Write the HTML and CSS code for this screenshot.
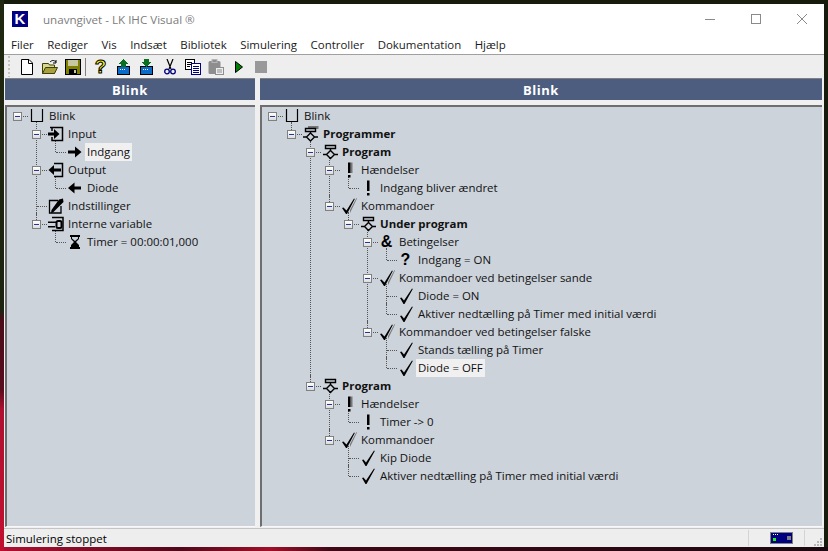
FILE: index.html
```html
<!DOCTYPE html>
<html lang="da">
<head>
    <meta charset="UTF-8">
    <title>unavngivet - LK IHC Visual</title>
    <link rel="stylesheet" href="styles.css">
</head>
<body>
    <svg class="sprite" width="0" height="0">
        <symbol id="i-root" viewBox="0 0 16 16"><path d="M2.5 1V13.5H13.5V1" fill="none" stroke="#000" stroke-width="1.2"/></symbol>
        <symbol id="i-input" viewBox="0 0 16 16"><path d="M2 1.5H14.5V14.5H4V11 M4 5V1.5" fill="none" stroke="#000" stroke-width="1.5"/><path d="M0 6.5H6V3L11.5 8L6 13V9.5H0Z" fill="#000"/></symbol>
        <symbol id="i-output" viewBox="0 0 16 16"><path d="M6 1.5H14.5V14.5H6" fill="none" stroke="#000" stroke-width="1.5"/><path d="M13 6.5H6V3L0.5 8L6 13V9.5H13Z" fill="#000"/></symbol>
        <symbol id="i-right" viewBox="0 0 16 16"><path d="M1 6.5H8V2.5L14.5 8L8 13.5V9.5H1Z" fill="#000"/></symbol>
        <symbol id="i-left" viewBox="0 0 16 16"><path d="M14 6.5H7.5V2.5L1 8L7.5 13.5V9.5H14Z" fill="#000"/></symbol>
        <symbol id="i-settings" viewBox="0 0 16 16"><path d="M10 2.5H1.5V15H13V8" fill="none" stroke="#000" stroke-width="1.3"/><path d="M11 1.5L15 0.5L15.5 4L5 14.5L3 15L3.5 12Z" fill="#000"/></symbol>
        <symbol id="i-vars" viewBox="0 0 16 16"><path d="M4 1.5H15V14.5H4" fill="none" stroke="#000" stroke-width="1.5"/><path d="M0 5.5H9V7H0Z M0 10H7V11.5H0Z" fill="#000"/><rect x="8.5" y="5" width="5" height="7" rx="1.5" fill="none" stroke="#000" stroke-width="2"/></symbol>
        <symbol id="i-timer" viewBox="0 0 16 16"><path d="M3 1H13V3H12V5L9 8L12 11V13H13V15H3V13H4V11L7 8L4 5V3H3Z" fill="#000"/><path d="M5 3H11V4.5L8 7L5 4.5Z" fill="#ccd3db"/></symbol>
        <symbol id="i-program" viewBox="0 0 16 16"><path d="M3.5 1.5H13.5V4.5H3.5Z M8.5 4.5V6.5 M8.5 6.5L12.5 10.5L8.5 14.5L4.5 10.5Z M1 10.5H4.5 M12.5 10.5H16" fill="none" stroke="#000" stroke-width="1.4"/></symbol>
        <symbol id="i-programs" viewBox="0 0 16 16"><path d="M5 0H15.5V3H5Z" fill="#777"/><path d="M2.5 2.5H12.5V5.5H2.5Z" fill="#ccd3db" stroke="#000" stroke-width="1.4"/><path d="M7.5 5.5V7 M7.5 7L11.5 11L7.5 15L3.5 11Z M0 11H3.5 M11.5 11H15" fill="none" stroke="#000" stroke-width="1.4"/></symbol>
        <symbol id="i-bang" viewBox="0 0 16 16"><path d="M7 0.5H9.5V11H7Z M7 13H9.5V15.5H7Z" fill="#000"/></symbol>
        <symbol id="i-bangs" viewBox="0 0 16 16"><path d="M9.5 0.5H11.5V11H9.5Z" fill="#777"/><path d="M7 0.5H9.5V11H7Z M7 13H9.5V15.5H7Z" fill="#000"/></symbol>
        <symbol id="i-check" viewBox="0 0 16 16"><path d="M2 10L3.5 9.5L6 12.5L14 0.5L14.8 1L6.5 16H5.5Z" fill="#000"/></symbol>
        <symbol id="i-checks" viewBox="0 0 16 16"><path d="M9 12L15.5 0L16 0.5L9 15Z" fill="#777"/><path d="M1 10L2.5 9.5L5.5 12.5L13 0.5L13.8 1L6 16H5Z" fill="#000"/></symbol>
    </svg>

    <div class="window">
        <header class="titlebar">
            <div class="logo">K</div>
            <span class="title">unavngivet - LK IHC Visual ®</span>
            <div class="win-buttons">
                <svg width="12" height="12" viewBox="0 0 12 12"><path d="M1 6.5H11" stroke="#8a8a8a"/></svg>
                <svg width="12" height="12" viewBox="0 0 12 12"><rect x="1.5" y="1.5" width="9" height="9" fill="none" stroke="#8a8a8a"/></svg>
                <svg width="12" height="12" viewBox="0 0 12 12"><path d="M1 1L11 11M11 1L1 11" stroke="#8a8a8a"/></svg>
            </div>
        </header>

        <nav class="menu">
            <span>Filer</span><span>Rediger</span><span>Vis</span><span>Indsæt</span><span>Bibliotek</span><span>Simulering</span><span>Controller</span><span>Dokumentation</span><span>Hjælp</span>
        </nav>

        <div class="toolbar">
            <div class="grip"></div>
            <span class="tool"><svg width="16" height="16" viewBox="0 0 16 16"><path d="M2.5 0.5H10L13.5 4V15.5H2.5Z" fill="#fff" stroke="#000"/><path d="M9.5 0.5V4.5H13.5" fill="none" stroke="#000"/></svg></span>
            <span class="tool"><svg width="16" height="16" viewBox="0 0 16 16"><path d="M0.5 14.5V4.5H6.5L7.5 6H12.5V14.5Z" fill="#d8d890" stroke="#404000"/><path d="M0.5 14.5L3.5 8.5H15.5L12.5 14.5Z" fill="#a8a040" stroke="#404000"/><path d="M8 3C10 1 12 1 14 3M14 1V4H11" fill="none" stroke="#000"/></svg></span>
            <span class="tool"><svg width="16" height="16" viewBox="0 0 16 16" shape-rendering="crispEdges"><rect x="0.5" y="0.5" width="15" height="15" fill="#808000" stroke="#000"/><rect x="3" y="1" width="10" height="6" fill="#c8c8a0"/><rect x="4" y="10" width="8" height="5" fill="#000"/><rect x="9" y="11" width="2" height="3" fill="#c8c8a0"/></svg></span>
            <span class="tool-sep"></span>
            <span class="tool"><span class="help-mark">?</span></span>
            <span class="tool"><svg width="16" height="16" viewBox="0 0 16 16" shape-rendering="crispEdges"><rect x="1.5" y="7.5" width="12" height="8" fill="#0a6cc8" stroke="#000"/><path d="M4 10H5V11H4Z M6 10H7V11H6Z M8 10H9V11H8Z" fill="#fff"/><path d="M7.5 0L13 5H10V8H5V5H2Z" fill="#0a7020"/></svg></span>
            <span class="tool"><svg width="16" height="16" viewBox="0 0 16 16" shape-rendering="crispEdges"><rect x="1.5" y="7.5" width="12" height="8" fill="#0a6cc8" stroke="#000"/><path d="M4 10H5V11H4Z M6 10H7V11H6Z M8 10H9V11H8Z" fill="#fff"/><path d="M5 0H10V3H13L7.5 8L2 3H5Z" fill="#0a7020"/></svg></span>
            <span class="tool"><svg width="16" height="16" viewBox="0 0 16 16"><path d="M5 0L9 10M11 0L7 10" fill="none" stroke="#000" stroke-width="1.2"/><circle cx="5" cy="12.5" r="2.3" fill="none" stroke="#000080" stroke-width="1.3"/><circle cx="11" cy="12.5" r="2.3" fill="none" stroke="#000080" stroke-width="1.3"/></svg></span>
            <span class="tool"><svg width="16" height="16" viewBox="0 0 16 16" shape-rendering="crispEdges"><rect x="0.5" y="0.5" width="9" height="10" fill="#fff" stroke="#000"/><path d="M2 3H7M2 5H7M2 7H5" stroke="#000"/><rect x="6.5" y="4.5" width="9" height="11" fill="#fff" stroke="#000080"/><path d="M8 7H14M8 9H14M8 11H14M8 13H14" stroke="#000080"/></svg></span>
            <span class="tool"><svg width="16" height="16" viewBox="0 0 16 16"><rect x="0.5" y="2" width="12" height="13" rx="1.5" fill="#8e8e8e"/><rect x="4" y="0.5" width="5" height="3" fill="#8e8e8e" stroke="#b5b5b5"/><rect x="7.5" y="8.5" width="8" height="7" fill="#eee" stroke="#8e8e8e"/><path d="M9 11H14M9 13H14" stroke="#8e8e8e"/></svg></span>
            <span class="tool"><svg width="16" height="16" viewBox="0 0 16 16"><path d="M4.5 2.5L11.5 8L4.5 13.5Z" fill="#008000" stroke="#000"/></svg></span>
            <span class="tool"><svg width="16" height="16" viewBox="0 0 16 16"><rect x="1" y="2" width="12" height="12" fill="#999"/></svg></span>
        </div>

        <div class="panels">
            <section class="panel panel-left">
                <h2 class="panel-head">Blink</h2>
                <div class="panel-body">
                    <ul class="tree">
                        <li><div class="row"><i class="exp"></i><svg class="ico"><use href="#i-root"/></svg><span class="label">Blink</span></div>
                            <ul>
                                <li><div class="row"><i class="exp"></i><svg class="ico"><use href="#i-input"/></svg><span class="label">Input</span></div>
                                    <ul>
                                        <li><div class="row"><i class="none"></i><svg class="ico"><use href="#i-right"/></svg><span class="label selected">Indgang</span></div></li>
                                    </ul>
                                </li>
                                <li><div class="row"><i class="exp"></i><svg class="ico"><use href="#i-output"/></svg><span class="label">Output</span></div>
                                    <ul>
                                        <li><div class="row"><i class="none"></i><svg class="ico"><use href="#i-left"/></svg><span class="label">Diode</span></div></li>
                                    </ul>
                                </li>
                                <li><div class="row"><i class="none"></i><svg class="ico"><use href="#i-settings"/></svg><span class="label">Indstillinger</span></div></li>
                                <li><div class="row"><i class="exp"></i><svg class="ico"><use href="#i-vars"/></svg><span class="label">Interne variable</span></div>
                                    <ul>
                                        <li><div class="row"><i class="none"></i><svg class="ico"><use href="#i-timer"/></svg><span class="label">Timer = 00:00:01,000</span></div></li>
                                    </ul>
                                </li>
                            </ul>
                        </li>
                    </ul>
                </div>
            </section>

            <section class="panel panel-right">
                <h2 class="panel-head">Blink</h2>
                <div class="panel-body">
                    <ul class="tree">
                        <li><div class="row"><i class="exp"></i><svg class="ico"><use href="#i-root"/></svg><span class="label">Blink</span></div>
                            <ul>
                                <li><div class="row"><i class="exp"></i><svg class="ico"><use href="#i-programs"/></svg><span class="label bold">Programmer</span></div>
                                    <ul>
                                        <li><div class="row"><i class="exp"></i><svg class="ico"><use href="#i-program"/></svg><span class="label bold">Program</span></div>
                                            <ul>
                                                <li><div class="row"><i class="exp"></i><svg class="ico"><use href="#i-bangs"/></svg><span class="label">Hændelser</span></div>
                                                    <ul>
                                                        <li><div class="row"><i class="none"></i><svg class="ico"><use href="#i-bang"/></svg><span class="label">Indgang bliver ændret</span></div></li>
                                                    </ul>
                                                </li>
                                                <li><div class="row"><i class="exp"></i><svg class="ico"><use href="#i-checks"/></svg><span class="label">Kommandoer</span></div>
                                                    <ul>
                                                        <li><div class="row"><i class="exp"></i><svg class="ico"><use href="#i-program"/></svg><span class="label bold">Under program</span></div>
                                                            <ul>
                                                                <li><div class="row"><i class="exp"></i><span class="ico glyph">&amp;</span><span class="label">Betingelser</span></div>
                                                                    <ul>
                                                                        <li><div class="row"><i class="none"></i><span class="ico glyph">?</span><span class="label">Indgang = ON</span></div></li>
                                                                    </ul>
                                                                </li>
                                                                <li><div class="row"><i class="exp"></i><svg class="ico"><use href="#i-checks"/></svg><span class="label">Kommandoer ved betingelser sande</span></div>
                                                                    <ul>
                                                                        <li><div class="row"><i class="none"></i><svg class="ico"><use href="#i-check"/></svg><span class="label">Diode = ON</span></div></li>
                                                                        <li><div class="row"><i class="none"></i><svg class="ico"><use href="#i-check"/></svg><span class="label">Aktiver nedtælling på Timer med initial værdi</span></div></li>
                                                                    </ul>
                                                                </li>
                                                                <li><div class="row"><i class="exp"></i><svg class="ico"><use href="#i-checks"/></svg><span class="label">Kommandoer ved betingelser falske</span></div>
                                                                    <ul>
                                                                        <li><div class="row"><i class="none"></i><svg class="ico"><use href="#i-check"/></svg><span class="label">Stands tælling på Timer</span></div></li>
                                                                        <li><div class="row"><i class="none"></i><svg class="ico"><use href="#i-check"/></svg><span class="label selected">Diode = OFF</span></div></li>
                                                                    </ul>
                                                                </li>
                                                            </ul>
                                                        </li>
                                                    </ul>
                                                </li>
                                            </ul>
                                        </li>
                                        <li><div class="row"><i class="exp"></i><svg class="ico"><use href="#i-program"/></svg><span class="label bold">Program</span></div>
                                            <ul>
                                                <li><div class="row"><i class="exp"></i><svg class="ico"><use href="#i-bangs"/></svg><span class="label">Hændelser</span></div>
                                                    <ul>
                                                        <li><div class="row"><i class="none"></i><svg class="ico"><use href="#i-bang"/></svg><span class="label">Timer -&gt; 0</span></div></li>
                                                    </ul>
                                                </li>
                                                <li><div class="row"><i class="exp"></i><svg class="ico"><use href="#i-checks"/></svg><span class="label">Kommandoer</span></div>
                                                    <ul>
                                                        <li><div class="row"><i class="none"></i><svg class="ico"><use href="#i-check"/></svg><span class="label">Kip Diode</span></div></li>
                                                        <li><div class="row"><i class="none"></i><svg class="ico"><use href="#i-check"/></svg><span class="label">Aktiver nedtælling på Timer med initial værdi</span></div></li>
                                                    </ul>
                                                </li>
                                            </ul>
                                        </li>
                                    </ul>
                                </li>
                            </ul>
                        </li>
                    </ul>
                </div>
            </section>
        </div>

        <footer class="statusbar">
            <span class="status-text">Simulering stoppet</span>
            <span class="status-cell">
                <span class="led"><b class="dots"></b><b class="green"></b><b class="square"></b></span>
            </span>
            <span class="status-grip">
                <svg width="9" height="9" viewBox="0 0 9 9"><path d="M6 0H8V2H6Z M3 3H5V5H3Z M6 3H8V5H6Z M0 6H2V8H0Z M3 6H5V8H3Z M6 6H8V8H6Z" fill="#b8b8b8"/></svg>
            </span>
        </footer>
    </div>
</body>
</html>
```

FILE: styles.css
```css
* {
    box-sizing: border-box;
}
body {
    margin: 0;
    padding: 4px;
    height: 551px;
    overflow: hidden;
    font-family: "Open Sans", "Noto Sans", sans-serif;
    font-size: 11.45px;
    color: #000;
    background:
        linear-gradient(#20280f 0, #1c2410 310px, #4a0c18 320px, #5a0c1c 390px, #b01030 410px, #c01030 540px) 0 0 / 4px 100% no-repeat,
        linear-gradient(90deg, #b01030 0, #50081a 180px, #a01028 270px, #400816 330px, #1c0810 100%) 0 100% / 100% 4px no-repeat,
        #161b0c;
}
.sprite {
    position: absolute;
}
.window {
    height: 543px;
    display: flex;
    flex-direction: column;
    background: #f0f0f0;
}

/* title bar */
.titlebar {
    height: 30px;
    background: #fff;
    display: flex;
    align-items: center;
    padding-left: 8px;
    flex: none;
}
.logo {
    width: 16px;
    height: 16px;
    background: #000080;
    color: #fff;
    font: bold 15px/16px "Liberation Sans", sans-serif;
    text-align: center;
}
.title {
    margin-left: 15px;
    font-size: 11.6px;
    color: #7c7c7c;
}
.win-buttons {
    margin-left: auto;
    display: flex;
    gap: 34px;
    padding-right: 16px;
}

/* menu */
.menu {
    height: 21px;
    flex: none;
    background: #fff;
    display: flex;
    align-items: center;
    padding-left: 7px;
    border-bottom: 1px solid #a0a0a0;
}
.menu span {
    margin-right: 13.5px;
    color: #1a1a1a;
}

/* toolbar */
.toolbar {
    height: 23px;
    flex: none;
    display: flex;
    align-items: center;
    background: #eeeeee;
    padding-left: 4px;
}
.grip {
    width: 2px;
    height: 21px;
    margin-right: 5px;
    background: repeating-linear-gradient(#c4c4c4 0 2px, transparent 2px 4px);
}
.tool {
    width: 23px;
    height: 22px;
    display: flex;
    align-items: center;
    justify-content: center;
}
.tool-sep {
    width: 1px;
    height: 18px;
    margin: 0 3px 0 1px;
    background: #808080;
}
.help-mark {
    font: bold 19px/20px "Liberation Sans", sans-serif;
    color: #ffff00;
    -webkit-text-stroke: 1px #000;
}

/* panels */
.panels {
    flex: 1;
    min-height: 0;
    display: flex;
    gap: 5px;
    padding: 0 2px 1px 1px;
    background: #f0f0f0;
}
.panel {
    display: flex;
    flex-direction: column;
}
.panel-left {
    width: 250px;
    flex: none;
}
.panel-right {
    flex: 1;
}
.panel-head {
    margin: 0;
    height: 22px;
    border-top: 1px solid #808080;
    background: #4d5d80;
    color: #fff;
    font-size: 13px;
    font-weight: 700;
    line-height: 22px;
    text-align: center;
    letter-spacing: 0.5px;
    flex: none;
}
.panel-body {
    flex: 1;
    margin-top: 5px;
    background: #ccd3db;
    border-top: 2px solid #6e6e6e;
    border-left: 2px solid #6e6e6e;
    border-bottom: 1px solid #f8f8f8;
    padding-left: 1px;
    overflow: hidden;
}

/* tree */
.tree, .tree ul {
    list-style: none;
    margin: 0;
    padding: 0;
}
.tree ul {
    margin-left: 19px;
}
.tree li {
    position: relative;
}
.tree ul > li::before {
    content: "";
    position: absolute;
    left: 9px;
    top: -3px;
    bottom: 0;
    border-left: 1px dotted #555;
}
.tree ul > li:last-child::before {
    bottom: auto;
    height: 12px;
}
.tree li::after {
    content: "";
    position: absolute;
    left: 10px;
    top: 9px;
    width: 10px;
    border-top: 1px dotted #555;
}
.row {
    position: relative;
    z-index: 1;
    height: 18px;
    display: flex;
    align-items: center;
    white-space: nowrap;
}
.none {
    width: 19px;
    flex: none;
}
.exp {
    width: 9px;
    height: 9px;
    margin: 0 5px;
    flex: none;
    border: 1px solid #808080;
    background:
        linear-gradient(#1f3a93, #1f3a93) center / 5px 1px no-repeat,
        linear-gradient(#fff, #dcdcdc);
}
.ico {
    width: 16px;
    height: 16px;
    margin: 0 1.5px;
    flex: none;
    position: relative;
}
.glyph {
    font: bold 16px/16px "Liberation Sans", sans-serif;
    text-align: center;
}
.label {
    margin-left: 1px;
    padding: 0 2px;
    line-height: 18px;
    height: 18px;
    color: #111;
}
.label.bold {
    font-weight: 700;
}
.label.selected {
    background: #f0f0f0;
}

/* status bar */
.statusbar {
    height: 19px;
    flex: none;
    display: flex;
    align-items: center;
    border-top: 1px solid #c4c4c4;
    background: #eeeeee;
    padding-left: 2px;
}
.status-text {
    flex: 1;
}
.status-cell {
    width: 57px;
    height: 16px;
    border-left: 1px solid #d4d4d4;
    border-right: 1px solid #d4d4d4;
    display: flex;
    align-items: center;
    justify-content: flex-end;
    padding-right: 11px;
}
.led {
    position: relative;
    width: 23px;
    height: 12px;
    background: #000080;
    border: 1px solid #808080;
    display: block;
}
.led b {
    position: absolute;
    display: block;
}
.led .dots {
    left: 2px;
    top: 1px;
    width: 5px;
    height: 1px;
    background: repeating-linear-gradient(90deg, #fff 0 1px, transparent 1px 2px);
}
.led .green {
    left: 2px;
    top: 5px;
    width: 3px;
    height: 3px;
    background: #20f020;
}
.led .square {
    right: 1px;
    top: 3px;
    width: 4px;
    height: 4px;
    background: #808080;
}
.status-grip {
    width: 19px;
    height: 18px;
    display: flex;
    align-items: flex-end;
    justify-content: flex-end;
    padding-right: 1px;
}
```
